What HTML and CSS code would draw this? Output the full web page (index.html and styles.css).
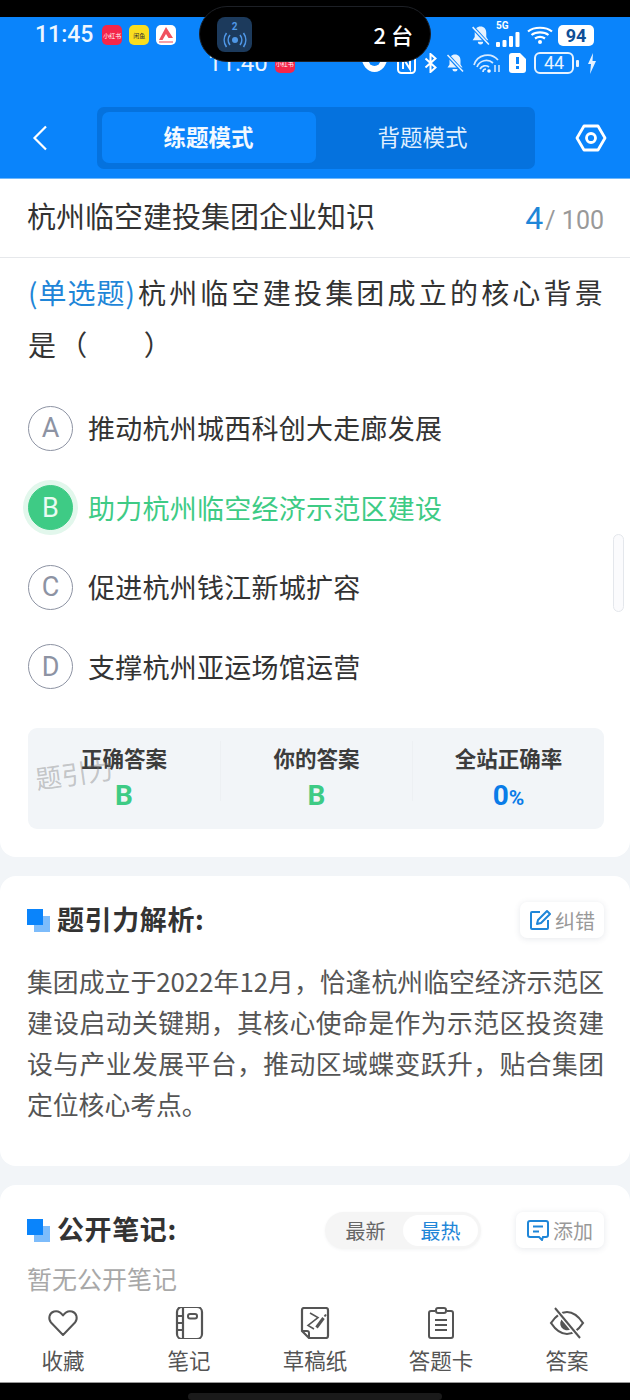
FILE: index.html
```html
<!DOCTYPE html>
<html lang="zh-CN">
<head>
<meta charset="utf-8">
<title>练题模式</title>
<link rel="stylesheet" href="styles.css">
</head>
<body>
<div class="phone">
  <div class="black-top"></div>
  <header class="header">
    <div class="status-row">
      <div class="status-left">
        <span class="clock">11:45</span>
        <span class="app-ico red">小红书</span>
        <span class="app-ico yellow">闲鱼</span>
        <span class="app-ico white-red"><svg viewBox="0 0 20 20" width="20" height="20"><path d="M10 2 L17 13 L12.500 13 L10 9 L6.500 15 L3 15 Z" fill="#f0525f"/><rect x="3" y="16" width="14" height="2" fill="#f7a0a6"/></svg></span>
      </div>
      <div class="status-right">
        <svg viewBox="0 0 20 20" width="21" height="21"><path d="M10 1.500c3.500 0 5.500 2.500 5.500 6v4l2 3H2.500l2-3v-4c0-3.500 2-6 5.500-6zM7.500 16h5a2.500 2.500 0 0 1-5 0z" fill="#e6f2ff"/><path d="M2 1.500L18 19" stroke="#0a84fb" stroke-width="3.500"/><path d="M2.500 2L18 18.500" stroke="#e6f2ff" stroke-width="1.500"/></svg>
        <span class="signal"><span class="five-g">5G</span><svg viewBox="0 0 24 16" width="24" height="16"><rect x="0" y="10" width="4" height="5" rx="1" fill="#fff"/><rect x="6.500" y="8" width="4" height="7" rx="1" fill="#fff"/><rect x="13" y="4" width="4" height="11" rx="1" fill="#fff"/><rect x="19.500" y="0" width="4" height="15" rx="1" fill="#fff"/></svg></span>
        <svg viewBox="0 0 26 20" width="26" height="20"><path d="M1 6.500C7 1.500 19 1.500 25 6.500M4.500 10C9 6.500 17 6.500 21.500 10M8 13.500c3-2 7-2 10 0" stroke="#fff" stroke-width="2.200" fill="none"/><circle cx="13" cy="17" r="2" fill="#fff"/></svg>
        <span class="batt-solid">94</span>
      </div>
    </div>
    <div class="status-row2">
      <span class="clock2">11:40</span>
      <span class="app-ico red small">小红书</span>
      <span class="row2-gap"></span>
      <div class="row2-icons">
        <svg viewBox="0 0 29 21" width="29" height="21"><path d="M1 3h27c-1 9-6 16-13.500 16S2 12 1 3z" fill="#fff"/><circle cx="14.500" cy="7" r="6" fill="#0a84fb"/></svg>
        <svg viewBox="0 0 19 21" width="19" height="21"><rect x="1" y="1" width="17" height="19" rx="3.500" fill="none" stroke="#fff" stroke-width="2"/><path d="M6 16V5l7 11V5" fill="none" stroke="#fff" stroke-width="2"/></svg>
        <svg viewBox="0 0 13 20" width="13" height="20"><path d="M1.500 5.500l10 9-5 4.500V1l5 4.500-10 9" fill="none" stroke="#fff" stroke-width="2"/></svg>
        <svg viewBox="0 0 20 20" width="20" height="20"><path d="M10 1.500c3.500 0 5.500 2.500 5.500 6v4l2 3H2.500l2-3v-4c0-3.500 2-6 5.500-6zM7.500 16h5a2.500 2.500 0 0 1-5 0z" fill="#e6f2ff"/><path d="M2 1.500L18 19" stroke="#0a84fb" stroke-width="3.500"/><path d="M2.500 2L18 18.500" stroke="#e6f2ff" stroke-width="1.500"/></svg>
        <svg viewBox="0 0 28 20" width="28" height="20"><path d="M1 12a14 14 0 0 1 24-5M4 14a10 10 0 0 1 16-4M7 16a6 6 0 0 1 9-2M10 19a3 3 0 0 1 3-3" fill="none" stroke="#d7eaff" stroke-width="1.700"/><circle cx="16" cy="18" r="1.800" fill="#fff"/><path d="M22 12v7M26 12v7" stroke="#d7eaff" stroke-width="1.500"/></svg>
        <svg viewBox="0 0 17 20" width="17" height="20"><path d="M3 0h8l6 6v11a3 3 0 0 1-3 3H3a3 3 0 0 1-3-3V3a3 3 0 0 1 3-3z" fill="#fff"/><rect x="7" y="4" width="3" height="7" fill="#0a84fb"/><rect x="7" y="13" width="3" height="3" fill="#0a84fb"/></svg>
        <span class="batt-outline">44</span>
        <span class="batt-tip"></span>
        <svg viewBox="0 0 10 21" width="10" height="21"><path d="M6 0L1 11h3l-1 10 6-13H5.500z" fill="#e6f2ff"/></svg>
      </div>
    </div>
    <div class="nav-row">
      <svg viewBox="0 0 16 26" width="16" height="26"><path d="M14 1.500L2.500 13 14 24.500" fill="none" stroke="#fff" stroke-width="2.200"/></svg>
      <div class="mode-switch">
        <span class="mode active">练题模式</span>
        <span class="mode">背题模式</span>
      </div>
      <svg viewBox="0 0 32 28" width="32" height="28"><path d="M9 2h14l7 12-7 12H9L2 14z" fill="none" stroke="#fff" stroke-width="2.800" stroke-linejoin="round"/><circle cx="16" cy="14" r="4.500" fill="none" stroke="#fff" stroke-width="2.800"/></svg>
    </div>
  </header>

  <div class="island">
    <span class="island-icon">
      <span class="island-num">2</span>
      <svg viewBox="0 0 26 16" width="26" height="16"><circle cx="13" cy="8" r="3" fill="#4f97e6"/><path d="M8 3a8 8 0 0 0 0 10M18 3a8 8 0 0 1 0 10M4.500 1a12 12 0 0 0 0 14M21.500 1a12 12 0 0 1 0 14" fill="none" stroke="#4f97e6" stroke-width="1.600"/></svg>
    </span>
    <span class="island-text">2 台</span>
  </div>

  <main class="content">
    <section class="card card-question">
      <div class="title-row">
        <h1 class="paper-title">杭州临空建投集团企业知识</h1>
        <div class="progress"><span class="progress-now">4</span><span class="progress-total">/ 100</span></div>
      </div>
      <div class="question-body">
        <p class="question"><span class="q-type">(单选题)</span>杭州临空建投集团成立的核心背景是（&emsp;&ensp;&#8202;）</p>
        <ul class="options">
          <li class="option"><span class="letter">A</span><span>推动杭州城西科创大走廊发展</span></li>
          <li class="option selected"><span class="letter">B</span><span>助力杭州临空经济示范区建设</span></li>
          <li class="option"><span class="letter">C</span><span>促进杭州钱江新城扩容</span></li>
          <li class="option"><span class="letter">D</span><span>支撑杭州亚运场馆运营</span></li>
        </ul>
        <div class="stats">
          <div class="stat"><span class="stat-label">正确答案</span><span class="stat-value green">B</span></div>
          <div class="stat"><span class="stat-label">你的答案</span><span class="stat-value green">B</span></div>
          <div class="stat"><span class="stat-label">全站正确率</span><span class="stat-value blue">0<small>%</small></span></div>
          <span class="watermark">题引力</span>
        </div>
      </div>
      <span class="scroll-thumb"></span>
    </section>

    <section class="card card-analysis">
      <div class="section-head">
        <span class="mark"></span>
        <h2 class="section-title">题引力解析:</h2>
        <span class="tool-btn">
          <svg viewBox="0 0 22 22" width="22" height="22"><path d="M11 3H3a1 1 0 0 0-1 1v15a1 1 0 0 0 1 1h15a1 1 0 0 0 1-1v-8" fill="none" stroke="#1f86d8" stroke-width="2"/><path d="M8 15l1-4 9-9 3 3-9 9z" fill="none" stroke="#1f86d8" stroke-width="2" stroke-linejoin="round"/></svg>
          纠错
        </span>
      </div>
      <p class="analysis">集团成立于2022年12月，恰逢杭州临空经济示范区建设启动关键期，其核心使命是作为示范区投资建设与产业发展平台，推动区域蝶变跃升，贴合集团定位核心考点。</p>
    </section>

    <section class="card card-notes">
      <div class="section-head">
        <span class="mark"></span>
        <h2 class="section-title">公开笔记:</h2>
        <div class="sort"><span class="sort-item">最新</span><span class="sort-item on">最热</span></div>
        <span class="tool-btn add">
          <svg viewBox="0 0 22 22" width="22" height="22"><path d="M3 2h16a2 2 0 0 1 2 2v12a2 2 0 0 1-2 2h-3l-1 3-3-3H3a2 2 0 0 1-2-2V4a2 2 0 0 1 2-2z" fill="none" stroke="#1f86d8" stroke-width="2"/><path d="M6 7.500h10M6 12.500h6" stroke="#1f86d8" stroke-width="2"/></svg>
          添加
        </span>
      </div>
      <p class="no-notes">暂无公开笔记</p>
    </section>
  </main>

  <nav class="tabbar">
    <div class="tab">
      <svg viewBox="0 0 32 32" width="32" height="32"><path d="M16 28L4 15.500C1 12 2 6 7 4.500c4-1 7 1 9 4 2-3 5-5 9-4 5 1.500 6 7.500 3 11z" fill="none" stroke="#555" stroke-width="2" stroke-linejoin="round"/></svg>
      <span>收藏</span>
    </div>
    <div class="tab">
      <svg viewBox="0 0 32 32" width="32" height="32"><rect x="4" y="0" width="25" height="32" rx="5" fill="none" stroke="#555" stroke-width="2.200"/><path d="M10 0v32M4 9h6M4 16h6M4 23h6" stroke="#555" stroke-width="2.200"/><rect x="15" y="7" width="9" height="4.500" rx="2" fill="none" stroke="#555" stroke-width="2"/></svg>
      <span>笔记</span>
    </div>
    <div class="tab">
      <svg viewBox="0 0 32 32" width="32" height="32"><path d="M5 1h22a2 2 0 0 1 2 2v26a2 2 0 0 1-2 2H10l-7-7V3a2 2 0 0 1 2-2z" fill="none" stroke="#555" stroke-width="2.200" stroke-linejoin="round"/><path d="M3 24h5a2 2 0 0 1 2 2v5" fill="none" stroke="#555" stroke-width="2"/><path d="M11 6l8 4.500-10 8 6 3.500" fill="none" stroke="#555" stroke-width="1.600"/><path d="M17.500 20.500l7-9.500" stroke="#555" stroke-width="3"/><path d="M25.500 9.500l1.500-2" stroke="#555" stroke-width="2"/></svg>
      <span>草稿纸</span>
    </div>
    <div class="tab">
      <svg viewBox="0 0 32 32" width="32" height="32"><path d="M10 4H6a2 2 0 0 0-2 2v23a2 2 0 0 0 2 2h20a2 2 0 0 0 2-2V6a2 2 0 0 0-2-2h-4" fill="none" stroke="#555" stroke-width="2"/><rect x="11" y="1" width="10" height="5" rx="2" fill="none" stroke="#555" stroke-width="2"/><path d="M10 13h12M10 18h12M10 23h12" stroke="#555" stroke-width="2"/></svg>
      <span>答题卡</span>
    </div>
    <div class="tab">
      <svg viewBox="0 0 36 32" width="36" height="32"><path d="M2 16C8 7 14 5 18 5s10 2 16 11c-6 9-12 11-16 11S8 25 2 16z" fill="none" stroke="#555" stroke-width="2.200"/><path d="M14 11a6 6 0 0 0 8 11z" fill="#555"/><path d="M6 1l25 30" stroke="#fff" stroke-width="5"/><path d="M6 1l25 30" stroke="#555" stroke-width="2"/></svg>
      <span>答案</span>
    </div>
  </nav>
  <div class="black-bottom"><span class="home-bar"></span></div>
</div>
</body>
</html>
```

FILE: styles.css
```css
* { box-sizing: border-box; }
html, body { margin: 0; padding: 0; }
body {
  width: 630px;
  height: 1400px;
  overflow: hidden;
  background: #f2f5f8;
  font-family: "Noto Sans CJK SC", "Noto Sans", sans-serif;
  color: #333;
}
h1, h2, p, ul { margin: 0; padding: 0; }
ul { list-style: none; }

.phone {
  position: relative;
  width: 630px;
  height: 1400px;
  display: flex;
  flex-direction: column;
  overflow: hidden;
  background: #f2f5f8;
}
.black-top { height: 17px; background: #000; flex: none; }

/* header */
.header {
  flex: none;
  height: 162px;
  background: #0a84fb;
  color: #fff;
  display: flex;
  flex-direction: column;
  border-bottom: 1px solid #6fb8fb;
}
.status-row {
  height: 34px;
  padding: 2px 36px 0 35px;
  display: flex;
  justify-content: space-between;
  align-items: center;
}
.status-left { display: flex; align-items: center; gap: 7px; }
.clock {
  font-family: "Roboto", sans-serif;
  font-size: 23px;
  font-weight: 500;
  line-height: 28px;
  margin-right: 2px;
  color: #eef6ff;
}
.app-ico {
  width: 20px;
  height: 20px;
  border-radius: 5px;
  display: inline-flex;
  align-items: center;
  justify-content: center;
  font-size: 6px;
  white-space: nowrap;
  overflow: hidden;
}
.red { background: #f5264a; color: #fff; }
.yellow { background: #f9de1f; color: #333; }
.white-red { background: #fff; }
.status-right { display: flex; align-items: center; gap: 5px; }
.signal { position: relative; display: inline-flex; width: 26px; height: 26px; align-items: flex-end; }
.five-g {
  position: absolute;
  left: 0;
  top: -2px;
  font-family: "Roboto", sans-serif;
  font-size: 10px;
  font-weight: 700;
  line-height: 12px;
}
.batt-solid {
  width: 36px;
  height: 21px;
  background: #fff;
  color: #0f4f96;
  border-radius: 5px;
  font-family: "Roboto", sans-serif;
  font-size: 18px;
  font-weight: 700;
  line-height: 21px;
  text-align: center;
}
.status-row2 {
  height: 24px;
  display: flex;
  align-items: center;
  padding: 0 33px 0 208px;
  color: #eaf4ff;
}
.clock2 {
  font-family: "Roboto", sans-serif;
  font-size: 24px;
  line-height: 24px;
  font-weight: 400;
  margin-right: 7px;
}
.app-ico.small { width: 20px; height: 20px; }
.row2-gap { flex: 1; }
.row2-icons { display: flex; align-items: center; gap: 8px; }
.batt-outline {
  width: 40px;
  height: 22px;
  border: 2px solid #e6f2ff;
  border-radius: 6px;
  font-family: "Roboto", sans-serif;
  font-size: 18px;
  line-height: 18px;
  text-align: center;
}
.batt-tip {
  width: 3px;
  height: 7px;
  margin-left: -6px;
  margin-right: 0;
  background: #e6f2ff;
  border-radius: 1px;
}
.nav-row {
  flex: 1;
  display: flex;
  align-items: center;
  justify-content: space-between;
  padding: 23px 23px 0 32px;
}
.mode-switch {
  width: 438px;
  height: 62px;
  padding: 5px;
  margin-left: 8px;
  background: #0572de;
  border-radius: 7px;
  display: flex;
}
.mode {
  width: 214px;
  height: 51px;
  font-size: 22.500px;
  line-height: 48px;
  text-align: center;
  color: #dfeeff;
  border-radius: 7px;
}
.mode.active {
  background: #0a84fb;
  color: #f3f9ff;
  font-weight: 700;
}

/* dynamic island */
.island {
  position: absolute;
  left: 199px;
  top: 6px;
  width: 232px;
  height: 56px;
  background: #000;
  border-radius: 28px;
  border: 1px solid #1d2026;
  display: flex;
  align-items: center;
  justify-content: space-between;
  padding: 0 17px 0 17px;
}
.island-icon {
  width: 35px;
  height: 35px;
  border-radius: 8px;
  background: #1c3a5c;
  display: flex;
  flex-direction: column;
  align-items: center;
  justify-content: center;
  color: #4f97e6;
}
.island-num {
  font-family: "Roboto", sans-serif;
  font-size: 10px;
  font-weight: 700;
  line-height: 11px;
}
.island-text {
  color: #fff;
  font-size: 22px;
  font-weight: 500;
  line-height: 24px;
}

/* content */
.content {
  flex: 1;
  min-height: 0;
  display: flex;
  flex-direction: column;
  gap: 19px;
  overflow: hidden;
}
.card { background: #fff; flex: none; }
.card-question {
  position: relative;
  height: 678px;
  border-radius: 0 0 16px 16px;
}
.title-row {
  height: 79px;
  padding: 0 26px 0 27px;
  display: flex;
  align-items: center;
  justify-content: space-between;
  border-bottom: 1px solid #e6e8eb;
}
.paper-title {
  font-size: 29px;
  font-weight: 400;
  color: #333;
  line-height: 40px;
  padding-bottom: 7px;
}
.progress {
  display: flex;
  align-items: baseline;
  gap: 2px;
  font-family: "Roboto", sans-serif;
  color: #999;
}
.progress-now { font-size: 32px; color: #1f86d8; font-weight: 400; }
.progress-total { font-size: 25px; }
.question-body { padding: 8px 26px 0 28px; }
.question {
  margin-right: -8px;
  font-size: 28px;
  line-height: 52px;
  letter-spacing: 3.200px;
  color: #333;
}
.q-type { color: #1f86d8; letter-spacing: 1px; margin-right: 2px; }
.options {
  margin-top: 35px;
  display: flex;
  flex-direction: column;
  gap: 33.500px;
}
.option {
  height: 46px;
  display: flex;
  align-items: center;
  gap: 15px;
  font-size: 27px;
  letter-spacing: 0.250px;
  line-height: 46px;
  color: #333;
}
.letter {
  flex: none;
  width: 45px;
  height: 45px;
  border: 1.500px solid #8d93a3;
  border-radius: 50%;
  display: flex;
  align-items: center;
  justify-content: center;
  font-family: "Roboto", sans-serif;
  font-size: 27px;
  letter-spacing: 0;
  color: #8d93a3;
}
.option.selected { color: #3ecb85; }
.option.selected .letter {
  background: #3ecb85;
  border-color: #3ecb85;
  color: #e9fbf2;
  box-shadow: 0 0 0 5px #e2f7ec;
}
.stats {
  position: relative;
  margin-top: 38.500px;
  height: 101px;
  background: #f2f5f8;
  border-radius: 9px;
  display: grid;
  grid-template-columns: repeat(3, 1fr);
  padding-top: 13px;
}
.stat {
  display: flex;
  flex-direction: column;
  align-items: center;
  height: 60px;
}
.stat + .stat { border-left: 1px solid #edf0f3; }
.stat-label {
  font-size: 21.500px;
  font-weight: 700;
  line-height: 34px;
  color: #3c3c3c;
}
.stat-value {
  margin-top: 3px;
  font-family: "Roboto", "Noto Sans", sans-serif;
  font-size: 28px;
  font-weight: 700;
  line-height: 36px;
}
.stat-value small { font-size: 21px; }
.green { color: #3ecb85; }
.blue { color: #0a7ce8; }
.watermark {
  position: absolute;
  left: 7px;
  top: 27px;
  font-size: 26px;
  line-height: 36px;
  color: rgba(120, 120, 120, 0.4);
  transform: rotate(-8deg);
}
.scroll-thumb {
  position: absolute;
  right: 6px;
  top: 355px;
  width: 11px;
  height: 78px;
  border: 1px solid #e4e7ec;
  border-radius: 6px;
  background: #fbfbfd;
}

/* sections */
.card-analysis {
  height: 290px;
  border-radius: 16px;
  padding: 26px 26px 0 27px;
}
.card-notes {
  height: 300px;
  border-radius: 16px 16px 0 0;
  padding: 27px 26px 0 27px;
}
.section-head {
  height: 36px;
  display: flex;
  align-items: center;
}
.mark {
  position: relative;
  flex: none;
  width: 23px;
  height: 23px;
  margin-right: 7px;
}
.mark::before,
.mark::after { content: ""; position: absolute; width: 16px; height: 16px; }
.mark::before { right: 0; bottom: 0; background: #7dbcfb; }
.mark::after { left: 0; top: 0; background: #0a84fb; }
.section-title {
  font-size: 27px;
  letter-spacing: 0.600px;
  font-weight: 700;
  line-height: 32px;
  padding-bottom: 3px;
  color: #333;
  flex: 1;
}
.tool-btn {
  flex: none;
  height: 36px;
  width: 84px;
  display: flex;
  align-items: center;
  justify-content: center;
  gap: 4px;
  border-radius: 7px;
  background: #fff;
  font-size: 20px;
  color: #999;
  box-shadow: 0 1px 6px rgba(60, 80, 110, 0.13);
}
.tool-btn.add { width: 88px; margin-left: 36px; }
.analysis {
  margin-top: 22px;
  font-size: 25.800px;
  line-height: 41px;
  color: #555;
  text-align: justify;
}
.sort {
  flex: none;
  width: 156px;
  height: 37px;
  margin-right: -1px;
  padding: 3px 3px;
  background: #f5f5f5;
  border-radius: 19px;
  display: flex;
  box-shadow: 0 1px 3px rgba(60, 80, 110, 0.06);
}
.sort-item {
  flex: 1;
  text-align: center;
  font-size: 20px;
  line-height: 31px;
  color: #666;
  border-radius: 16px;
}
.sort-item.on { flex: none; width: 75px; background: #fff; color: #1f86d8; }
.no-notes {
  margin-top: 12px;
  font-size: 25px;
  line-height: 36px;
  color: #a8a8a8;
}

/* tabbar */
.tabbar {
  position: absolute;
  left: 0;
  right: 0;
  top: 1300px;
  height: 83px;
  padding: 7px 0 0;
  background: #fff;
  display: grid;
  grid-template-columns: repeat(5, 126px);
}
.tab {
  display: flex;
  flex-direction: column;
  align-items: center;
  font-size: 21.500px;
  line-height: 30px;
  color: #555;
  gap: 6px;
}
.black-bottom {
  position: absolute;
  left: 0;
  right: 0;
  top: 1382px;
  height: 18px;
  background: #000;
  border-top: 1px solid #999;
  display: flex;
  justify-content: center;
  padding-top: 10px;
}
.home-bar {
  width: 254px;
  height: 7px;
  border-radius: 4px;
  background: #1a1a1a;
}
```
